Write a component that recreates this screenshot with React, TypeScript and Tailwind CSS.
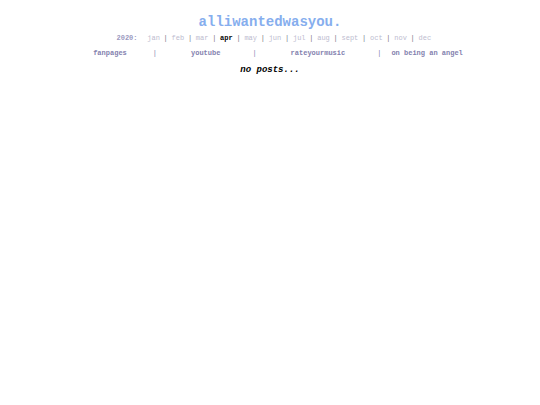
import { Fragment } from 'react';

const months = ['jan', 'feb', 'mar', 'apr', 'may', 'jun', 'jul', 'aug', 'sept', 'oct', 'nov', 'dec'];
const currentMonth = 'apr';

export default function App() {
  return (
    <div className="min-h-screen bg-white pt-3 text-center font-['Courier_New','Liberation_Mono',monospace]">
      <header className="flex flex-col items-center">
        <h1 className="text-[14px] leading-5 font-bold text-[#86aeee]">
          <a href="#home">alliwantedwasyou.</a>
        </h1>

        {/* archive */}
        <nav aria-label="archive" className="flex w-full max-w-[323px] items-center justify-between pl-2 text-[7px] leading-3">
          <span className="mr-1.5 font-bold text-[#9c9abf]">2020:</span>
          {months.map((month, i) => (
            <Fragment key={month}>
              {i > 0 && <span className="text-[#77777f]">|</span>}
              <a
                href={`#${month}`}
                className={month === currentMonth ? 'font-bold text-black' : 'text-[#bdbccf]'}
              >
                {month}
              </a>
            </Fragment>
          ))}
        </nav>

        {/* links */}
        <nav aria-label="links" className="mt-[3px] flex items-center pl-4 text-[7px] leading-3 whitespace-nowrap text-[#8381ae]">
          <a href="#fanpages" className="font-bold">fanpages</a>
          <span className="pr-[34px] pl-[26px]">|</span>
          <a href="#youtube" className="font-bold">youtube</a>
          <span className="pr-[34px] pl-8">|</span>
          <a href="#rateyourmusic" className="font-bold">rateyourmusic</a>
          <span className="pr-2.5 pl-8">|</span>
          <a href="#on-being-an-angel" className="font-bold">on being an angel</a>
        </nav>
      </header>

      <main className="mt-[3px]">
        <p className="text-[9px] leading-4 font-bold text-black italic">no posts...</p>
      </main>
    </div>
  );
}
